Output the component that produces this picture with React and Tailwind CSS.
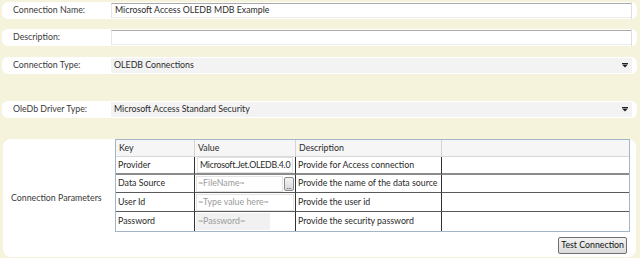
import React from "react";

const font = { fontFamily: "Lato, 'Liberation Sans', sans-serif" };

function Arrow() {
  return (
    <svg width="6" height="5" viewBox="0 0 6 5" className="block">
      <rect x="0" y="0" width="6" height="1" fill="#222" />
      <path d="M0 1.5 L6 1.5 L3 4.5 Z" fill="#222" />
    </svg>
  );
}

function TextRow({ label, value, className = "" }) {
  return (
    <div className={"flex h-[17px] rounded-[6px] bg-white ml-[2px] mr-[3px] " + className}>
      <div className="w-[109px] pl-[11px] flex items-center text-[#3a3a3a]">{label}</div>
      <div className="flex-1 mt-[1px] mb-[1px] border-t border-t-[#a9a9a9] border-b border-b-[#ececec] border-l border-l-[#e6e6e6] bg-white flex items-center pl-[3px] text-[#2a2a2a]">
        {value}
      </div>
      <div className="w-[6px] border-l border-l-[#dedede]" />
    </div>
  );
}

function ComboRow({ label, value, className = "" }) {
  return (
    <div className={"flex h-[17px] rounded-[6px] bg-white ml-[2px] mr-[3px] " + className}>
      <div className="w-[109px] pl-[11px] flex items-center text-[#3a3a3a]">{label}</div>
      <div className="flex-1 my-[1px] bg-[#f3f3f3] flex items-center pl-[3px] pr-[4px] text-[#2a2a2a]">
        <span className="flex-1">{value}</span>
        <Arrow />
      </div>
      <div className="w-[5px]" />
    </div>
  );
}

function Cell({ children, className = "" }) {
  return <div className={"flex items-center overflow-hidden " + className}>{children}</div>;
}

export default function App() {
  const rowLine = "border-b border-b-[#5a5a5a]";
  return (
    <div className="w-[640px] h-[258px] bg-[#f5f3dc] text-[8.8px] leading-none overflow-hidden whitespace-nowrap" style={font}>
      <div className="pt-[2px] flex flex-col">
        <TextRow label="Connection Name:" value="Microsoft Access OLEDB MDB Example" />
        <TextRow label="Description:" value="" className="mt-[10px]" />
        <ComboRow label="Connection Type:" value="OLEDB Connections" className="mt-[11px]" />
        <ComboRow label="OleDb Driver Type:" value="Microsoft Access Standard Security" className="mt-[27px]" />

        <div className="mt-[21px] ml-[3px] mr-[4px] h-[118px] bg-white rounded-[8px] flex">
          <div className="w-[112px] pl-[8px] flex items-center text-[#3a3a3a]">Connection Parameters</div>
          <div className="flex-1 flex flex-col pr-[6px]">
            <div className="border border-[#a5b5c8] grid grid-cols-[79px_101px_146px_1fr] text-[#2a2a2a]">
              {/* header */}
              <Cell className="h-[17px] pl-[3px] bg-[#f6f6f6] border-b border-b-[#d8d8d8] border-r border-r-[#d4d4d4]">Key</Cell>
              <Cell className="h-[17px] pl-[3px] bg-[#f6f6f6] border-b border-b-[#d8d8d8] border-r border-r-[#d4d4d4]">Value</Cell>
              <Cell className="h-[17px] pl-[3px] bg-[#f6f6f6] border-b border-b-[#d8d8d8] border-r border-r-[#d4d4d4]">Description</Cell>
              <Cell className="h-[17px] bg-[#f6f6f6] border-b border-b-[#d8d8d8]"></Cell>

              {/* Provider */}
              <Cell className="h-[18px] pl-[2px] border-b-2 border-b-[#8c8c8c] border-r border-r-[#333]">Provider</Cell>
              <Cell className="h-[18px] px-[2px] border-b-2 border-b-[#8c8c8c] border-r border-r-[#333]">
                <div className="w-full h-[16px] border border-[#e2e2e2] bg-white flex items-center pl-[2px] tracking-[-0.25px]">
                  Microsoft.Jet.OLEDB.4.0
                </div>
              </Cell>
              <Cell className="h-[18px] pl-[2px] border-b-2 border-b-[#8c8c8c] border-r border-r-[#333]">Provide for Access connection</Cell>
              <Cell className="h-[18px] border-b-2 border-b-[#8c8c8c]"></Cell>

              {/* Data Source */}
              <Cell className={"h-[18px] pl-[2px] border-r border-r-[#333] " + rowLine}>Data Source</Cell>
              <Cell className={"h-[18px] pl-[1px] pr-[1px] border-r border-r-[#333] " + rowLine}>
                <div className="flex-1 h-[16px] border border-[#e4e4e4] bg-white flex items-center pl-[1px] text-[#9a9a9a]">~FileName~</div>
                <div className="w-[10px] h-[14px] ml-[1px] border border-[#8a8a8a] rounded-[2px] bg-gradient-to-b from-[#f4f4f4] to-[#d8d8d8] flex items-end justify-center text-[7px] leading-[7px] text-[#333]">...</div>
              </Cell>
              <Cell className={"h-[18px] pl-[2px] border-r border-r-[#333] " + rowLine}>Provide the name of the data source</Cell>
              <Cell className={"h-[18px] " + rowLine}></Cell>

              {/* User Id */}
              <Cell className={"h-[19px] pl-[2px] border-r border-r-[#333] " + rowLine}>User Id</Cell>
              <Cell className={"h-[19px] pl-[1px] pr-[1px] border-r border-r-[#333] " + rowLine}>
                <div className="flex-1 h-[17px] border border-[#e4e4e4] bg-white flex items-center pl-[1px] text-[#9a9a9a]">~Type value here~</div>
              </Cell>
              <Cell className={"h-[19px] pl-[2px] border-r border-r-[#333] " + rowLine}>Provide the user id</Cell>
              <Cell className={"h-[19px] " + rowLine}></Cell>

              {/* Password */}
              <Cell className="h-[19px] pl-[2px] border-r border-r-[#333]">Password</Cell>
              <Cell className="h-[19px] pl-[1px] border-r border-r-[#333]">
                <div className="w-[74px] h-[17px] bg-[#f1f1f1] flex items-center pl-[2px] text-[#9a9a9a]">~Password~</div>
              </Cell>
              <Cell className="h-[19px] pl-[2px] border-r border-r-[#333]">Provide the security password</Cell>
              <Cell className="h-[19px]"></Cell>
            </div>
            <div className="flex justify-end mt-[5px] pr-[3px]">
              <div className="h-[17px] px-[2px] border border-[#707070] rounded-[2px] bg-gradient-to-b from-[#f2f2f2] to-[#dcdcdc] flex items-center text-[#111]">
                Test Connection
              </div>
            </div>
          </div>
        </div>
      </div>
    </div>
  );
}
